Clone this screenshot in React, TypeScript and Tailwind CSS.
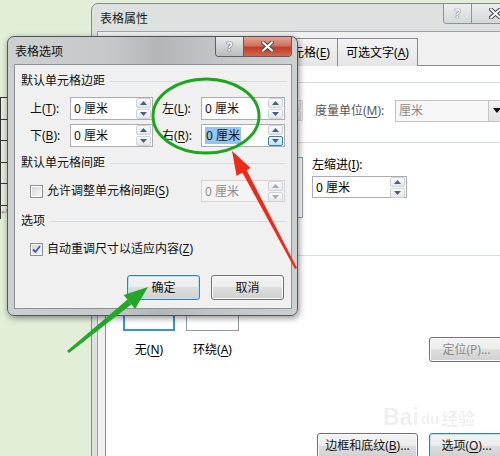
import React from "react";

const font = "font-['Noto_Sans','Noto_Sans_CJK_SC',sans-serif]";

function U({ children }: { children: React.ReactNode }) {
  return <span className="underline underline-offset-[2px] decoration-[1px]">{children}</span>;
}

function Spin({ disabled, hot }: { disabled?: boolean; hot?: boolean }) {
  const arrow = disabled ? "#a8a8a8" : "#4a5c86";
  return (
    <div className="flex flex-col gap-px pr-px">
      <div className="w-[15px] h-[10px] rounded-[2px] border border-[#cfd2d8] bg-gradient-to-b from-[#fcfcfc] to-[#e4e6ea] flex items-center justify-center">
        <svg width="7" height="4" viewBox="0 0 7 4">
          <path d="M3.5 0L7 4H0z" fill={arrow} />
        </svg>
      </div>
      <div
        className={`w-[15px] h-[10px] rounded-[2px] border flex items-center justify-center ${
          hot
            ? "border-[#3c7fb1] bg-gradient-to-b from-[#eaf6fd] to-[#bde3fb]"
            : "border-[#cfd2d8] bg-gradient-to-b from-[#fcfcfc] to-[#e4e6ea]"
        }`}
      >
        <svg width="7" height="4" viewBox="0 0 7 4">
          <path d="M0 0H7L3.5 4z" fill={arrow} />
        </svg>
      </div>
    </div>
  );
}

function Field({
  w,
  h = "h-[23px]",
  value = "0 厘米",
  selected,
  disabled,
  hot,
}: {
  w: string;
  h?: string;
  value?: string;
  selected?: boolean;
  disabled?: boolean;
  hot?: boolean;
}) {
  return (
    <div
      className={`${w} ${h} border flex items-center ${
        disabled ? "border-[#d5d5d5] bg-[#f4f4f4] text-[#8d8d8d]" : "border-[#abadb3] bg-white"
      }`}
    >
      <div className="flex-1 pl-[3px] leading-[15px]">
        <span className={selected ? "bg-[#95c4f0] px-px" : ""}>{value}</span>
      </div>
      <Spin disabled={disabled} hot={hot} />
    </div>
  );
}

function Check({ checked }: { checked?: boolean }) {
  return (
    <div className="w-[13px] h-[13px] border border-[#8f8f8f] bg-white p-px shrink-0">
      <div className="w-full h-full bg-gradient-to-br from-[#d4d7db] to-[#f7f7f7] flex items-center justify-center">
        {checked && (
          <svg width="9" height="9" viewBox="0 0 9 9">
            <path d="M1 4.5L3.5 7L8 1" stroke="#44579a" strokeWidth="1.8" fill="none" />
          </svg>
        )}
      </div>
    </div>
  );
}

function Btn({
  children,
  w,
  h = "h-[25px]",
  def,
  disabled,
}: {
  children: React.ReactNode;
  w: string;
  h?: string;
  def?: boolean;
  disabled?: boolean;
}) {
  return (
    <div
      className={`${w} ${h} rounded-[3px] border flex items-center justify-center bg-[linear-gradient(#f3f3f3_0%,#ececec_50%,#dedede_50%,#d0d0d0_100%)] ${
        def
          ? "border-[#3c7fb1] shadow-[inset_0_0_0_1px_#b9e0f6]"
          : "border-[#707070] shadow-[inset_0_0_0_1px_#fbfbfb]"
      } ${disabled ? "text-[#8a8a8a]" : "text-[#111]"}`}
    >
      {children}
    </div>
  );
}

function GroupHead({ title, pad }: { title: string; pad: string }) {
  return (
    <div className={`flex items-center gap-[5px] ${pad}`}>
      <span>{title}</span>
      <div className="flex-1 border-t border-[#d6dbe0]" />
    </div>
  );
}

function CloseGlyph() {
  return (
    <svg width="13" height="11" viewBox="0 0 13 11">
      <path d="M2 1.5L11 9.5M11 1.5L2 9.5" stroke="#4a4a4a" strokeWidth="4" strokeLinecap="square" />
      <path d="M2 1.5L11 9.5M11 1.5L2 9.5" stroke="#ffffff" strokeWidth="2" strokeLinecap="square" />
    </svg>
  );
}

function BackWindow() {
  return (
    <div className="absolute left-[91px] top-[3px] w-[436px] h-[470px] rounded-t-[7px] border border-[#848a8f] bg-[#dde2e0] flex flex-col">
      <div className="h-[27px] flex items-start justify-between">
        <div className="pl-[8px] pt-[6px] text-[#1a1a1a]">表格属性</div>
        <div className="flex mr-[6px] rounded-b-[4px] border border-t-0 border-[#8d9398] overflow-hidden">
          <div className="w-[28px] h-[19px] bg-gradient-to-b from-[#ecefef] to-[#d3d8d9] flex items-center justify-center border-r border-[#8d9398] text-[13px] font-bold text-white [text-shadow:0_0_1px_#555,0_0_1px_#555]">
            ?
          </div>
          <div className="w-[47px] h-[19px] bg-gradient-to-b from-[#ecefef] to-[#d3d8d9] flex items-center justify-center">
            <CloseGlyph />
          </div>
        </div>
      </div>
      <div className="flex-1 ml-[5px] mr-[6px] border border-[#9da3a8] bg-[#f0f0f0] pt-[4px] pl-[7px] pr-[7px] flex flex-col">
        <div className="flex h-[30px] -mb-px relative">
          <div className="w-[62px] border border-b-0 border-[#898c95] bg-white flex items-center justify-center">表格(<U>T</U>)</div>
          <div className="w-[52px] mt-[2px] border border-b-0 border-l-0 border-[#898c95] flex items-center justify-center">行(<U>R</U>)</div>
          <div className="w-[54px] mt-[2px] border border-b-0 border-l-0 border-[#898c95] flex items-center justify-center">列(<U>U</U>)</div>
          <div className="w-[65px] mt-[2px] border border-b-0 border-l-0 border-[#898c95] bg-gradient-to-b from-[#f2f2f2] to-[#e5e5e5] flex items-center justify-center">单元格(<U>E</U>)</div>
          <div className="w-[80px] mt-[2px] border border-b-0 border-l-0 border-[#898c95] bg-gradient-to-b from-[#f2f2f2] to-[#e5e5e5] flex items-center justify-center">可选文字(<U>A</U>)</div>
        </div>
        <div className="flex-1 border border-[#898c95] bg-white flex flex-col pt-[7px]">
          <div className="h-[18px]">
            <GroupHead title="尺寸" pad="pl-[7px] pr-[7px]" />
          </div>
          <div className="mt-[9px] h-[21px] flex items-center pl-[12px]">
            <div className="w-[95px] flex items-center gap-[4px]">
              <Check />
              <span>指定宽度(<U>W</U>):</span>
            </div>
            <Field w="w-[90px]" h="h-[21px]" value="0 厘米" disabled />
            <div className="ml-[12px] w-[80px] text-[#555]">度量单位(<U>M</U>):</div>
            <div className="w-[111px] h-[22px] border border-[#c3c3c3] bg-[#f7f7f7] flex items-center">
              <span className="flex-1 pl-[3px] text-[#8a8a8a]">厘米</span>
              <div className="w-[17px] h-full border-l border-[#c3c3c3] bg-gradient-to-b from-[#f4f4f4] to-[#e2e2e2] flex items-center justify-center">
                <svg width="8" height="5" viewBox="0 0 8 5">
                  <path d="M0 0H8L4 5z" fill="#111" />
                </svg>
              </div>
            </div>
          </div>
          <div className="mt-[12px] h-[18px]">
            <GroupHead title="对齐方式" pad="pl-[7px] pr-[7px]" />
          </div>
          <div className="mt-[6px] flex pl-[21px]">
            <div className="flex gap-[10px]">
              <div className="w-[52px] h-[61px] border border-[#8e9aa8] bg-white" />
              <div className="w-[52px] h-[61px] border border-[#8e9aa8] bg-white" />
              <div className="w-[52px] h-[61px] border border-[#8e9aa8] bg-white" />
            </div>
            <div className="ml-[9px] flex flex-col">
              <div className="leading-[16px]">
                左缩进(<U>I</U>):
              </div>
              <div className="mt-[3px]">
                <Field w="w-[95px]" h="h-[22px]" />
              </div>
            </div>
          </div>
          <div className="mt-[28px] h-[18px]">
            <GroupHead title="文字环绕" pad="pl-[7px] pr-[7px]" />
          </div>
          <div className="flex pl-[17px] pr-[7px]">
            <div className="flex gap-[11px] mt-[15px]">
              <div className="flex flex-col items-center">
                <div className="w-[52px] h-[52px] border-2 border-[#3d8ee6] bg-white" />
                <div className="mt-[11px] leading-[16px]">
                  无(<U>N</U>)
                </div>
              </div>
              <div className="flex flex-col items-center">
                <div className="w-[53px] h-[52px] border border-[#8e9aa8] bg-white" />
                <div className="mt-[11px] leading-[16px]">
                  环绕(<U>A</U>)
                </div>
              </div>
            </div>
            <div className="ml-auto mt-[73px]">
              <Btn w="w-[75px]" h="h-[25px]" disabled>
                定位(P)...
              </Btn>
            </div>
          </div>
          <div className="mt-[71px] flex justify-end gap-[11px] pr-[7px]">
            <Btn w="w-[101px]" h="h-[25px]">
              边框和底纹(<U>B</U>)...
            </Btn>
            <Btn w="w-[75px]" h="h-[25px]" def>
              选项(<U>O</U>)...
            </Btn>
          </div>
        </div>
      </div>
    </div>
  );
}

function FrontDialog() {
  return (
    <div className="absolute left-[7px] top-[36px] w-[291px] h-[280px] rounded-[7px] border border-[#50565b] bg-[linear-gradient(90deg,#cdd0d1_0%,#c6c9ca_35%,#b2b6b8_52%,#c1c4c5_70%,#cdd0d1_100%)] shadow-[1px_2px_6px_rgba(0,0,0,0.45)] flex flex-col">
      <div className="h-[27px] flex items-start justify-between">
        <div className="pl-[7px] pt-[6px] text-[#111]">表格选项</div>
        <div className="flex mr-[5px] rounded-b-[4px] border border-t-0 border-[#5b6166] overflow-hidden">
          <div className="w-[28px] h-[19px] bg-gradient-to-b from-[#e8eaeb] to-[#b9bdc0] flex items-center justify-center border-r border-[#5b6166] text-[13px] font-bold text-white [text-shadow:0_0_1px_#333,0_0_1px_#333]">
            ?
          </div>
          <div className="w-[47px] h-[19px] bg-[linear-gradient(#e4a394_0%,#d0725f_45%,#bf3f29_55%,#d2664c_100%)] flex items-center justify-center">
            <CloseGlyph />
          </div>
        </div>
      </div>
      <div className="flex-1 ml-[6px] mr-[5px] mb-[6px] border border-[#8b9196] bg-[#f0f0f0] pt-[4px] flex flex-col text-[#111]">
        <div className="h-[24px] flex items-center">
          <div className="flex-1">
            <GroupHead title="默认单元格边距" pad="pl-[6px] pr-[5px]" />
          </div>
        </div>
        <div className="mt-[4px] flex items-center pl-[15px]">
          <div className="w-[40px]">
            上(<U>T</U>):
          </div>
          <Field w="w-[83px]" />
          <div className="ml-[9px] w-[39px]">
            左(<U>L</U>):
          </div>
          <Field w="w-[84px]" />
        </div>
        <div className="mt-[4px] flex items-center pl-[15px]">
          <div className="w-[40px]">
            下(<U>B</U>):
          </div>
          <Field w="w-[83px]" />
          <div className="ml-[9px] w-[39px]">
            右(<U>R</U>):
          </div>
          <Field w="w-[84px]" selected hot />
        </div>
        <div className="mt-[4px] h-[24px] flex items-center">
          <div className="flex-1">
            <GroupHead title="默认单元格间距" pad="pl-[6px] pr-[5px]" />
          </div>
        </div>
        <div className="mt-[5px] flex items-center pl-[15px]">
          <div className="w-[171px] flex items-center gap-[4px]">
            <Check />
            <span>
              允许调整单元格间距(<U>S</U>)
            </span>
          </div>
          <Field w="w-[84px]" h="h-[22px]" disabled />
        </div>
        <div className="mt-[7px] h-[24px] flex items-center">
          <div className="flex-1">
            <GroupHead title="选项" pad="pl-[6px] pr-[5px]" />
          </div>
        </div>
        <div className="mt-[6px] h-[20px] flex items-center gap-[4px] pl-[15px]">
          <Check checked />
          <span>
            自动重调尺寸以适应内容(<U>Z</U>)
          </span>
        </div>
        <div className="mt-[16px] flex justify-end gap-[11px] pr-[7px]">
          <Btn w="w-[73px]" def>
            确定
          </Btn>
          <Btn w="w-[73px]">取消</Btn>
        </div>
      </div>
    </div>
  );
}

function DocTable() {
  return (
    <div className="absolute left-0 top-[97px] w-[7px] border-l border-[#333] flex flex-col">
      {[0, 1, 2, 3, 4].map((i) => (
        <div key={i} className="h-[21.5px] border-t border-[#333]" />
      ))}
      <div className="h-[14px] border-t border-[#333] text-[9px] leading-[12px] text-[#999]">↵</div>
    </div>
  );
}

function Marks() {
  return (
    <svg className="absolute inset-0 pointer-events-none" width="500" height="456" viewBox="0 0 500 456">
      <ellipse cx="206" cy="116" rx="53" ry="37" fill="none" stroke="#1ea51e" strokeWidth="3" />
      {/* red arrow */}
      <polygon points="241.5,171 245.8,168.6 297,268 295,269" fill="#ee2b18" />
      <polygon points="232,151 250.6,168.1 236.6,175.9" fill="#ee2b18" />
      {/* green arrow */}
      <polygon points="127.5,299.5 131.3,304.6 69,353 67,351" fill="#22a826" />
      <polygon points="148,287 135.1,309.1 123.7,295.1" fill="#22a826" />
    </svg>
  );
}

export default function App() {
  return (
    <div className={`relative w-[500px] h-[456px] overflow-hidden bg-[#e2eed8] text-[12px] ${font}`}>
      <DocTable />
      <BackWindow />
      <FrontDialog />
      <Marks />
      <div className="absolute left-[383px] top-[404px] pointer-events-none flex items-end text-[#000]/[0.07] font-['Liberation_Sans',sans-serif] font-bold">
        <span className="text-[23px] leading-[26px]">Bai</span>
        <span className="text-[15px] leading-[22px] mx-[2px]">du</span>
        <span className="text-[17px] leading-[24px] font-['Noto_Sans_CJK_SC',sans-serif]">经验</span>
      </div>
    </div>
  );
}
